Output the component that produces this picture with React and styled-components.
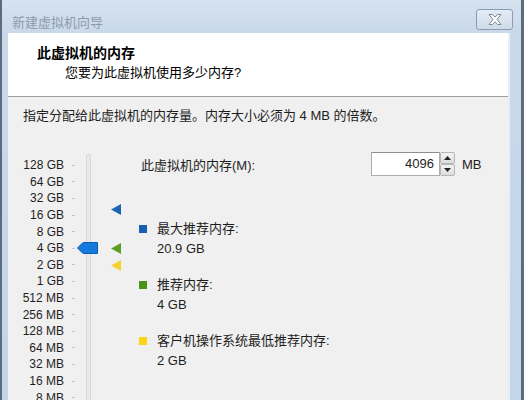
import styled, { createGlobalStyle } from "styled-components"

const GlobalStyle = createGlobalStyle`
html, body {
  margin: 0;
  padding: 0;
  width: 524px;
  height: 400px;
  overflow: hidden;
}
body {
  font-family: "Liberation Sans", "Noto Sans CJK SC", sans-serif;
  font-size: 13px;
  color: #1e1e1e;
}
`

// scale: 128 GB at top, each row one power of two
const ROW = 16.6
const LABELS = ["128 GB", "64 GB", "32 GB", "16 GB", "8 GB", "4 GB", "2 GB", "1 GB", "512 MB", "256 MB", "128 MB", "64 MB", "32 MB", "16 MB", "8 MB"]
const TOP_PAD = 5
const rowCenter = (gb) => TOP_PAD + (7 - Math.log2(gb)) * ROW + ROW / 2

const markers = [
  { gb: 20.9, color: "#1b66b3" },
  { gb: 4, color: "#5b9e27" },
  { gb: 2, color: "#f4d12c" },
]

const legend = [
  { color: "#1561b0", title: "最大推荐内存:", value: "20.9 GB" },
  { color: "#4b9317", title: "推荐内存:", value: "4 GB" },
  { color: "#fcd417", title: "客户机操作系统最低推荐内存:", value: "2 GB" },
]

const App = () => {
  return (
    <>
      <GlobalStyle />
      <Frame>
        <TitleBar>
          <TitleText>新建虚拟机向导</TitleText>
          <CloseButton>
            <svg width="20" height="13" viewBox="0 0 20 13">
              <path
                d="M4 1.5 L7.5 1.5 L10 4.2 L12.5 1.5 L16 1.5 L12 6.5 L16 11.5 L12.5 11.5 L10 8.8 L7.5 11.5 L4 11.5 L8 6.5 Z"
                fill="#ffffff"
                stroke="#7d8896"
                strokeWidth="1"
                strokeLinejoin="round"
              />
            </svg>
          </CloseButton>
        </TitleBar>
        <Client>
          <Header>
            <HeaderTitle>此虚拟机的内存</HeaderTitle>
            <HeaderSub>您要为此虚拟机使用多少内存?</HeaderSub>
          </Header>
          <Body>
            <Description>指定分配给此虚拟机的内存量。内存大小必须为 4 MB 的倍数。</Description>
            <MainRow>
              <Scale>
                <Labels>
                  {LABELS.map((l) => (
                    <ScaleRow key={l}>
                      <ScaleLabel>{l}</ScaleLabel>
                      <Tick />
                    </ScaleRow>
                  ))}
                </Labels>
                <Track />
                <Thumb style={{ top: rowCenter(4) - 6 }}>
                  <svg width="21" height="12" viewBox="0 0 21 12">
                    <path d="M0.5 6 L6 0.5 L20.5 0.5 L20.5 11.5 L6 11.5 Z" fill="#1379dc" stroke="#0d5fb3" />
                  </svg>
                </Thumb>
                {markers.map((m) => (
                  <Marker key={m.gb} style={{ top: rowCenter(m.gb) - 5 }}>
                    <svg width="10" height="11" viewBox="0 0 10 11">
                      <path d="M0 5.5 L10 0 L10 11 Z" fill={m.color} />
                    </svg>
                  </Marker>
                ))}
              </Scale>
              <Side>
                <MemoryRow>
                  <FieldLabel>此虚拟机的内存(M):</FieldLabel>
                  <SpinBox>
                    <SpinValue>4096</SpinValue>
                    <SpinButtons>
                      <SpinButton>
                        <svg width="7" height="4" viewBox="0 0 7 4"><path d="M0 4 L3.5 0 L7 4 Z" fill="#222" /></svg>
                      </SpinButton>
                      <SpinButton>
                        <svg width="7" height="4" viewBox="0 0 7 4"><path d="M0 0 L3.5 4 L7 0 Z" fill="#222" /></svg>
                      </SpinButton>
                    </SpinButtons>
                  </SpinBox>
                  <Unit>MB</Unit>
                </MemoryRow>
                <Legend>
                  {legend.map((it) => (
                    <LegendItem key={it.title}>
                      <Swatch $color={it.color} />
                      <LegendText>
                        <div>{it.title}</div>
                        <div>{it.value}</div>
                      </LegendText>
                    </LegendItem>
                  ))}
                </Legend>
              </Side>
            </MainRow>
          </Body>
        </Client>
      </Frame>
    </>
  )
}

const Frame = styled.div`
display: flex;
flex-direction: column;
width: 524px;
height: 400px;
box-sizing: border-box;
border-left: 2px solid #5c6b7d;
border-right: 3px solid #5c6b7d;
background: linear-gradient(to bottom, #d6e2ef 0px, #c9d9ea 33px, #c3d5e9 100%);
`

const TitleBar = styled.div`
height: 33px;
flex-shrink: 0;
display: flex;
align-items: center;
justify-content: space-between;
padding: 0 8px 0 10px;
`

const TitleText = styled.div`
font-size: 13px;
color: #8e9bab;
margin-top: 10px;
`

const CloseButton = styled.div`
width: 35px;
height: 19px;
margin-top: 6px;
border: 1px solid #8d9bad;
border-radius: 3px;
background: linear-gradient(to bottom, #e4ecf5, #cfdbe9);
display: flex;
align-items: center;
justify-content: center;
`

const Client = styled.div`
flex: 1;
display: flex;
flex-direction: column;
margin: 0 11px 0 6px;
border-right: 2px solid #e6eef7;
overflow: hidden;
`

const Header = styled.div`
height: 64px;
flex-shrink: 0;
background: #ffffff;
border-bottom: 1px solid #a0a0a0;
box-shadow: 0 1px 0 #ffffff;
box-sizing: border-box;
padding: 10px 0 0 29px;
`

const HeaderTitle = styled.div`
font-size: 14px;
font-weight: bold;
line-height: 20px;
color: #000;
`

const HeaderSub = styled.div`
font-size: 13px;
line-height: 20px;
padding-left: 28px;
color: #000;
`

const Body = styled.div`
flex: 1;
background: #f0f0f0;
padding: 10px 0 0 15px;
`

const Description = styled.div`
line-height: 17px;
`

const MainRow = styled.div`
display: flex;
margin-top: 28px;
`

const Scale = styled.div`
position: relative;
display: flex;
width: 121px;
margin-left: -5px;
padding-top: ${TOP_PAD}px;
flex-shrink: 0;
`

const Labels = styled.div`
display: flex;
flex-direction: column;
`

const ScaleRow = styled.div`
display: flex;
align-items: center;
height: ${ROW}px;
`

const ScaleLabel = styled.div`
width: 46px;
text-align: right;
white-space: nowrap;
font-size: 12px;
color: #1e1e1e;
`

const Tick = styled.div`
width: 3px;
height: 1px;
background: #c4c4c4;
margin-left: 8px;
`

const Track = styled.div`
width: 3px;
margin: -3px 0 0 11px;
height: 320px;
background: #e7eaea;
border: 1px solid #d6d6d6;
border-radius: 2px;
`

const Thumb = styled.div`
position: absolute;
left: 59px;
line-height: 0;
`

const Marker = styled.div`
position: absolute;
left: 93px;
line-height: 0;
`

const Side = styled.div`
flex: 1;
display: flex;
flex-direction: column;
`

const MemoryRow = styled.div`
display: flex;
align-items: center;
`

const FieldLabel = styled.div`
width: 230px;
padding-left: 2px;
`

const SpinBox = styled.div`
display: flex;
height: 24px;
`

const SpinValue = styled.div`
width: 62px;
height: 22px;
border: 1px solid #abadb3;
border-top-color: #8e8f8f;
background: #fff;
text-align: right;
padding-right: 5px;
line-height: 22px;
font-size: 13px;
`

const SpinButtons = styled.div`
display: flex;
flex-direction: column;
width: 15px;
`

const SpinButton = styled.div`
flex: 1;
display: flex;
align-items: center;
justify-content: center;
border: 1px solid #b5b5b5;
border-radius: 2px;
background: linear-gradient(to bottom, #f4f4f4, #dcdcdc);
`

const Unit = styled.div`
margin-left: 7px;
`

const Legend = styled.div`
display: flex;
flex-direction: column;
gap: 17px;
margin-top: 43px;
`

const LegendItem = styled.div`
display: flex;
align-items: flex-start;
`

const Swatch = styled.div`
width: 8px;
height: 8px;
margin-top: 6px;
background: ${(p) => p.$color};
`

const LegendText = styled.div`
margin-left: 10px;
line-height: 19.5px;
`

export default App
